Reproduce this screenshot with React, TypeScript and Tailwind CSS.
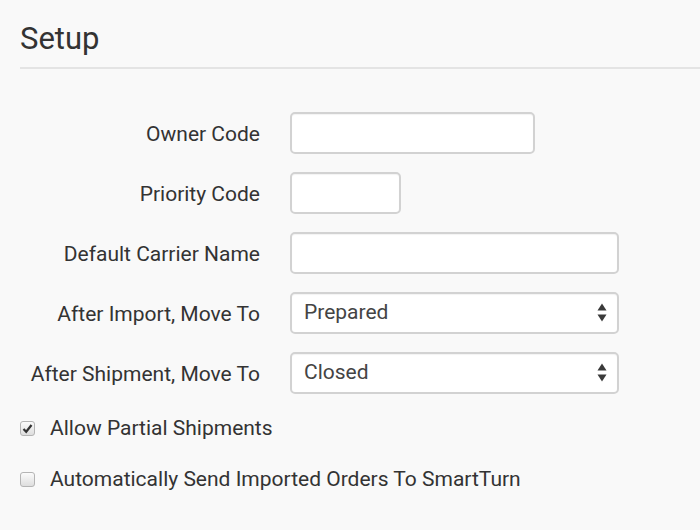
import React from 'react';

const labelCls = 'w-[240px] shrink-0 pt-[4px] text-right text-[21px] text-[#333]';
const boxCls =
    'h-[42px] rounded-[5px] border-2 border-[#d2d2d2] bg-white shadow-[inset_0_1px_1px_rgba(0,0,0,0.05)] outline-none';

const SelectBox: React.FC<{ value: string; options: string[] }> = ({ value, options }) => (
    <div className="relative w-[329px]">
        <select
            defaultValue={value}
            className={`${boxCls} w-full appearance-none pl-[12px] text-[21px] text-[#444]`}
        >
            {options.map(o => (
                <option key={o}>{o}</option>
            ))}
        </select>
        {/* up/down arrows */}
        <svg className="pointer-events-none absolute right-[12px] top-[11px]" width="10" height="19" viewBox="0 0 10 19">
            <path d="M5 0.5 L9.5 7.5 L0.5 7.5 Z" fill="#3a3a3a" />
            <path d="M5 18.5 L9.5 11.5 L0.5 11.5 Z" fill="#3a3a3a" />
        </svg>
    </div>
);

const Row: React.FC<{ label: string; children: React.ReactNode }> = ({ label, children }) => (
    <div className="flex items-center gap-[30px]">
        <label className={labelCls}>{label}</label>
        {children}
    </div>
);

const Check: React.FC<{ checked?: boolean; label: string }> = ({ checked, label }) => (
    <label className="flex items-center gap-[15px]">
        <span className="relative flex h-[15px] w-[15px]">
            <input
                type="checkbox"
                defaultChecked={checked}
                className="peer h-[15px] w-[15px] appearance-none rounded-[3px] border border-[#b4b4b4] bg-gradient-to-b from-[#fbfbfb] to-[#dedede]"
            />
            <svg
                className="pointer-events-none absolute left-[2px] top-[2px] hidden peer-checked:block"
                width="11"
                height="11"
                viewBox="0 0 11 11"
            >
                <path d="M1.5 6 L4.2 8.8 L9.5 2" stroke="#333" strokeWidth="2.2" fill="none" />
            </svg>
        </span>
        {label}
    </label>
);

export default function App() {
    const statuses = ['Prepared', 'Closed', 'Open', 'Shipped'];
    return (
        <div className="min-h-[530px] w-[700px] bg-[#f9f9f9] pl-[20px] font-['Roboto',sans-serif]">
            <h2 className="border-b-2 border-[#e4e4e4] pt-[19px] pb-[8px] text-[31px] leading-[40px] text-[#333]">
                Setup
            </h2>

            <div className="mt-[43px] flex flex-col gap-[18px]">
                <Row label="Owner Code">
                    <input type="text" className={`${boxCls} w-[245px]`} />
                </Row>
                <Row label="Priority Code">
                    <input type="text" className={`${boxCls} w-[111px]`} />
                </Row>
                <Row label="Default Carrier Name">
                    <input type="text" className={`${boxCls} w-[329px]`} />
                </Row>
                <Row label="After Import, Move To">
                    <SelectBox value="Prepared" options={statuses} />
                </Row>
                <Row label="After Shipment, Move To">
                    <SelectBox value="Closed" options={statuses} />
                </Row>
            </div>

            <div className="mt-[19px] flex flex-col gap-[19px] text-[21px] text-[#333]">
                <Check checked label="Allow Partial Shipments" />
                <Check label="Automatically Send Imported Orders To SmartTurn" />
            </div>
        </div>
    );
}
